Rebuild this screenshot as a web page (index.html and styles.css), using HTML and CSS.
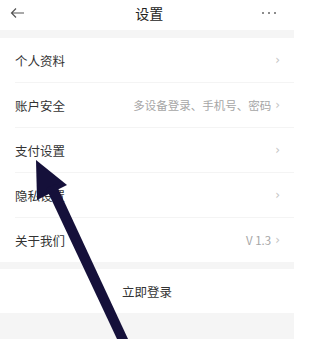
FILE: index.html
```html
<!DOCTYPE html>
<html lang="zh-CN">
<head>
<meta charset="utf-8">
<link rel="stylesheet" href="styles.css">
</head>
<body>
<div class="page">
  <div class="header">
    <svg class="back" width="15" height="12" viewBox="0 0 15 12"><path d="M14 6H1.5M6 1.5L1.5 6 6 10.5" fill="none" stroke="#555" stroke-width="1.2"/></svg>
    <div class="title">设置</div>
    <div class="dots"><span></span><span></span><span></span></div>
  </div>
  <div class="gap"></div>
  <div class="list">
    <div class="row"><span class="label">个人资料</span><span class="right"><span class="chev">›</span></span></div>
    <div class="row"><span class="label">账户安全</span><span class="right"><span class="value">多设备登录、手机号、密码</span><span class="chev">›</span></span></div>
    <div class="row"><span class="label">支付设置</span><span class="right"><span class="chev">›</span></span></div>
    <div class="row"><span class="label">隐私设置</span><span class="right"><span class="chev">›</span></span></div>
    <div class="row"><span class="label">关于我们</span><span class="right"><span class="value">V 1.3</span><span class="chev">›</span></span></div>
  </div>
  <div class="gap gap-small"></div>
  <div class="login">立即登录</div>
  <div class="bottom"></div>
</div>
<svg class="pointer" width="312" height="339" viewBox="0 0 312 339">
  <polygon points="36,160 67,185 37,200" fill="#15103a"/>
  <polygon points="46,188 56,184 128,339 117,339" fill="#15103a"/>
</svg>
</body>
</html>
```
FILE: styles.css
```css
html, body {
  margin: 0;
  padding: 0;
  background: #fff;
}
body {
  font-family: "Noto Sans CJK SC", "Noto Sans", sans-serif;
  width: 312px;
  height: 339px;
  overflow: hidden;
  position: relative;
}
.page {
  width: 294px;
  background: #fff;
}
.header {
  height: 30px;
  display: flex;
  align-items: center;
  justify-content: space-between;
  padding: 0 18px 4px 10px;
  box-sizing: border-box;
}
.back {
  display: block;
}
.title {
  font-size: 14px;
  color: #222;
  margin-left: 12px;
}
.dots {
  display: flex;
  gap: 3.5px;
}
.dots span {
  width: 2.5px;
  height: 2.5px;
  border-radius: 50%;
  background: #666;
}
.gap {
  height: 8px;
  background: #f5f5f5;
}
.gap-small {
  height: 7px;
}
.list {
  display: flex;
  flex-direction: column;
}
.row {
  height: 44px;
  margin-left: 15px;
  padding-right: 14px;
  display: flex;
  align-items: center;
  justify-content: space-between;
  border-bottom: 1px solid #f4f4f4;
}
.row:last-child {
  border-bottom: none;
}
.label {
  font-size: 12.5px;
  color: #333;
}
.right {
  display: flex;
  align-items: center;
  gap: 4px;
}
.value {
  font-size: 11.5px;
  color: #a6a6a6;
}
.chev {
  font-size: 12px;
  color: #c4c4c4;
  font-family: "DejaVu Sans", sans-serif;
  line-height: 1;
}
.login {
  height: 44px;
  display: flex;
  align-items: center;
  justify-content: center;
  font-size: 12.5px;
  color: #333;
}
.bottom {
  height: 40px;
  background: #f5f5f5;
}
.pointer {
  position: absolute;
  left: 0;
  top: 0;
}
```
